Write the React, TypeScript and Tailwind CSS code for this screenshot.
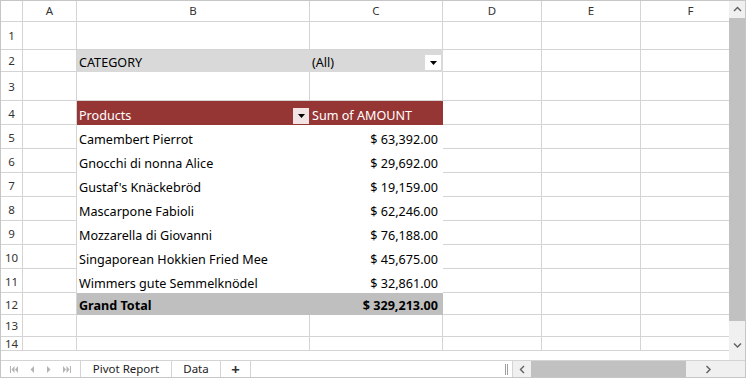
import React from "react";

const cols = ["A", "B", "C", "D", "E", "F"];

const rows: { label: string; amount: string }[] = [
  { label: "Camembert Pierrot", amount: "$ 63,392.00" },
  { label: "Gnocchi di nonna Alice", amount: "$ 29,692.00" },
  { label: "Gustaf's Knäckebröd", amount: "$ 19,159.00" },
  { label: "Mascarpone Fabioli", amount: "$ 62,246.00" },
  { label: "Mozzarella di Giovanni", amount: "$ 76,188.00" },
  { label: "Singaporean Hokkien Fried Mee", amount: "$ 45,675.00" },
  { label: "Wimmers gute Semmelknödel", amount: "$ 32,861.00" },
];

const G = "border-[#d4d4d4]";

function Tri({ color = "#000" }: { color?: string }) {
  return (
    <svg width="7" height="4" viewBox="0 0 7 4">
      <polygon points="0,0 7,0 3.5,4" fill={color} />
    </svg>
  );
}

function Chev({ dir }: { dir: "up" | "down" | "left" | "right" }) {
  const pts =
    dir === "up"
      ? "1,5 4.5,1.5 8,5"
      : dir === "down"
      ? "1,1.5 4.5,5 8,1.5"
      : dir === "left"
      ? "5,1 1.5,4.5 5,8"
      : "1.5,1 5,4.5 1.5,8";
  const w = dir === "up" || dir === "down" ? 9 : 7;
  const h = dir === "up" || dir === "down" ? 7 : 9;
  return (
    <svg width={w} height={h} viewBox={`0 0 ${w} ${h}`}>
      <polyline points={pts} fill="none" stroke="#5f5f5f" strokeWidth="1.4" />
    </svg>
  );
}

function RowHdr({ n, tall = false }: { n: number; tall?: boolean }) {
  return (
    <div
      className={`border-r border-b ${G} flex items-center justify-center ${
        tall ? "pt-[3px]" : "pt-[1px]"
      } text-[11.5px] leading-none text-[#333]`}
    >
      {n}
    </div>
  );
}

function Cell({ className = "" }: { className?: string }) {
  return <div className={`border-r border-b ${G} ${className}`} />;
}

export default function App() {
  return (
    <div className="w-[746px] h-[378px] border border-[#c6c6c6] flex flex-col bg-white font-['Noto_Sans',sans-serif] text-black overflow-hidden">
      <div className="flex h-[359px]">
        <div className="w-[728px] overflow-hidden">
          <div className="grid grid-cols-[22px_54px_233px_133px_99px_99px_100px] grid-rows-[21px_28px_22px_29px_24px_24px_24px_24px_24px_24px_24px_24px_22px_22px]">
            {/* header row */}
            <div className={`border-r border-b ${G}`} />
            {cols.map((c) => (
              <div
                key={c}
                className={`border-r border-b ${G} flex items-center justify-center text-[11.5px] text-[#333]`}
              >
                {c}
              </div>
            ))}

            {/* row 1 */}
            <RowHdr n={1} />
            <Cell />
            <Cell />
            <Cell />
            <Cell />
            <Cell />
            <Cell />

            {/* row 2 */}
            <RowHdr n={2} />
            <Cell />
            <div className="col-span-2 bg-[#d9d9d9] border-b border-r border-[#d9d9d9] flex items-end text-[12.6px] leading-none">
              <div className="w-[233px] pl-[2px] pb-[1px]">CATEGORY</div>
              <div className="flex-1 flex items-end justify-between">
                <span className="pl-[2px] pb-[1px]">(All)</span>
                <span className="w-[16px] h-[15px] bg-white flex items-center justify-center mr-[1px] mb-[1px]">
                  <Tri />
                </span>
              </div>
            </div>
            <Cell />
            <Cell />
            <Cell />

            {/* row 3 */}
            <RowHdr n={3} />
            <Cell />
            <Cell />
            <Cell />
            <Cell />
            <Cell />
            <Cell />

            {/* row 4 */}
            <RowHdr n={4} tall />
            <Cell />
            <div className="col-span-2 bg-[#963634] border-b border-r border-[#963634] flex items-end text-[12.6px] leading-none text-white">
              <div className="w-[233px] flex items-end justify-between">
                <span className="pl-[2px] pb-[1px]">Products</span>
                <span className="w-[16px] h-[16px] bg-[#f2e4e4] flex items-center justify-center mr-[1px]">
                  <Tri />
                </span>
              </div>
              <div className="flex-1 pl-[2px] pb-[1px]">Sum of AMOUNT</div>
            </div>
            <Cell />
            <Cell />
            <Cell />

            {/* data rows */}
            {rows.map((r, i) => (
              <React.Fragment key={r.label}>
                <RowHdr n={5 + i} tall />
                <Cell />
                <div className="border-b border-white flex items-end pl-[2px] pb-[1px] text-[12.6px] leading-none whitespace-nowrap">
                  {r.label}
                </div>
                <div className="border-b border-r border-white flex items-end justify-end pr-[4px] pb-[1px] text-[12.6px] leading-none">
                  {r.amount}
                </div>
                <Cell />
                <Cell />
                <Cell />
              </React.Fragment>
            ))}

            {/* row 12 */}
            <RowHdr n={12} tall />
            <Cell />
            <div className="col-span-2 bg-[#bfbfbf] border-b border-r border-[#bfbfbf] flex items-end justify-between text-[12.6px] leading-none font-bold">
              <span className="pl-[2px] pb-[1px]">Grand Total</span>
              <span className="pr-[4px] pb-[1px]">$ 329,213.00</span>
            </div>
            <Cell />
            <Cell />
            <Cell />

            {/* row 13 */}
            <RowHdr n={13} />
            <Cell />
            <Cell />
            <Cell />
            <Cell />
            <Cell />
            <Cell />

            {/* row 14 */}
            <RowHdr n={14} />
            <Cell />
            <Cell />
            <Cell />
            <Cell />
            <Cell />
            <Cell />
          </div>
        </div>
        {/* vertical scrollbar */}
        <div className="w-[16px] bg-[#f0f0f0] flex flex-col">
          <div className="h-[17px] flex items-center justify-center">
            <Chev dir="up" />
          </div>
          <div className="h-[303px] bg-[#c1c1c1]" />
          <div className="flex-1 flex items-end justify-center pb-[11px]">
            <Chev dir="down" />
          </div>
        </div>
      </div>

      {/* tab bar */}
      <div className="h-[17px] border-t border-[#d4d4d4] flex bg-white text-[11.5px] text-[#222]">
        <div className="w-[80px] flex items-center justify-around px-[3px] border-r border-[#d4d4d4]">
          <svg width="8" height="7" viewBox="0 0 8 7">
            <rect x="0" y="0" width="1" height="7" fill="#b4b4b4" />
            <polygon points="4.5,0 1.5,3.5 4.5,7" fill="#b4b4b4" />
            <polygon points="8,0 5,3.5 8,7" fill="#b4b4b4" />
          </svg>
          <svg width="4" height="7" viewBox="0 0 4 7">
            <polygon points="4,0 0.5,3.5 4,7" fill="#b4b4b4" />
          </svg>
          <svg width="4" height="7" viewBox="0 0 4 7">
            <polygon points="0,0 3.5,3.5 0,7" fill="#b4b4b4" />
          </svg>
          <svg width="8" height="7" viewBox="0 0 8 7">
            <polygon points="0,0 3,3.5 0,7" fill="#b4b4b4" />
            <polygon points="3.5,0 6.5,3.5 3.5,7" fill="#b4b4b4" />
            <rect x="7" y="0" width="1" height="7" fill="#b4b4b4" />
          </svg>
        </div>
        <div className="w-[91px] border-r border-[#d4d4d4] flex items-center justify-center bg-white leading-none">
          Pivot Report
        </div>
        <div className="w-[49px] border-r border-[#d4d4d4] flex items-center justify-center leading-none">
          Data
        </div>
        <div className="w-[30px] border-r border-[#d4d4d4] flex items-center justify-center text-[15px] font-bold leading-none text-[#333]">
          +
        </div>
        <div className="flex-1 flex items-center justify-end pr-[4px]">
          <div className="w-[3px] h-[11px] border-l border-r border-[#a0a0a0]" />
        </div>
        {/* horizontal scrollbar */}
        <div className="w-[233px] border-l border-[#d4d4d4] bg-[#f0f0f0] flex items-stretch">
          <div className="w-[18px] flex items-center justify-center">
            <Chev dir="left" />
          </div>
          <div className="w-[155px] bg-[#c1c1c1]" />
          <div className="w-[43px] flex items-center justify-center pl-[2px]">
            <Chev dir="right" />
          </div>
          <div className="flex-1" />
        </div>
      </div>
    </div>
  );
}
